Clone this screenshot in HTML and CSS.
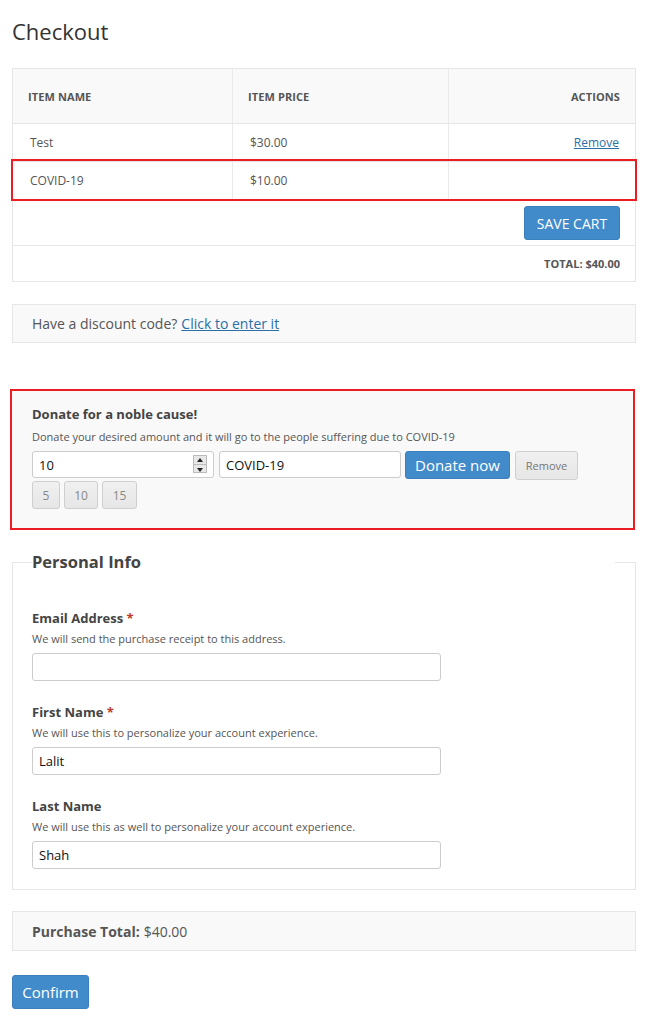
FILE: index.html
```html
<!DOCTYPE html>
<html>
<head>
<meta charset="utf-8">
<link rel="stylesheet" href="styles.css">
</head>
<body>
<div class="page">
  <h1 class="title">Checkout</h1>

  <div class="cart">
    <div class="row head">
      <div class="cell c1">Item Name</div>
      <div class="cell c2">Item Price</div>
      <div class="cell c3">Actions</div>
    </div>
    <div class="row item">
      <div class="cell c1">Test</div>
      <div class="cell c2">$30.00</div>
      <div class="cell c3"><a href="#" class="link">Remove</a></div>
    </div>
    <div class="row item highlight">
      <div class="cell c1">COVID-19</div>
      <div class="cell c2">$10.00</div>
      <div class="cell c3"></div>
    </div>
    <div class="row save-row">
      <button class="btn btn-primary btn-save">Save Cart</button>
    </div>
    <div class="row total-row">Total: $40.00</div>
  </div>

  <div class="well discount">Have a discount code? <a href="#" class="link">Click to enter it</a></div>

  <div class="donate">
    <div class="donate-title">Donate for a noble cause!</div>
    <div class="donate-desc">Donate your desired amount and it will go to the people suffering due to COVID-19</div>
    <div class="donate-row">
      <div class="num-wrap">
        <input class="input donate-input" type="text" value="10">
        <span class="spinner"><span class="sp-up"></span><span class="sp-down"></span></span>
      </div>
      <input class="input donate-input" type="text" value="COVID-19">
      <button class="btn btn-primary btn-donate">Donate now</button>
      <button class="btn btn-grey btn-remove">Remove</button>
    </div>
    <div class="amounts">
      <button class="btn btn-grey amt a5">5</button>
      <button class="btn btn-grey amt a10">10</button>
      <button class="btn btn-grey amt a15">15</button>
    </div>
  </div>

  <fieldset class="personal">
    <legend class="legend">Personal Info</legend>
    <div class="field first">
      <label class="label">Email Address <span class="req">*</span></label>
      <div class="help">We will send the purchase receipt to this address.</div>
      <input class="input field-input" type="text" value="">
    </div>
    <div class="field">
      <label class="label">First Name <span class="req">*</span></label>
      <div class="help">We will use this to personalize your account experience.</div>
      <input class="input field-input" type="text" value="Lalit">
    </div>
    <div class="field">
      <label class="label">Last Name</label>
      <div class="help">We will use this as well to personalize your account experience.</div>
      <input class="input field-input" type="text" value="Shah">
    </div>
  </fieldset>

  <div class="well purchase"><strong class="pt-label">Purchase Total:</strong> $40.00</div>

  <button class="btn btn-primary btn-confirm">Confirm</button>
</div>
</body>
</html>
```
FILE: styles.css
```css
* { box-sizing: border-box; }
html, body { margin: 0; padding: 0; background: #fff; }
body { font-family: "Open Sans", "Liberation Sans", sans-serif; color: #555; }

.page { width: 624px; margin-left: 12px; }

.title {
  margin: 14px 0 20px;
  font-size: 22px;
  line-height: 34px;
  font-weight: 400;
  color: #333;
}

.cart { border: 1px solid #e6e6e6; border-top: none; }
.row { display: flex; border-top: 1px solid #e6e6e6; }
.cell { font-size: 12px; display: flex; align-items: center; }
.c1 { width: 220px; border-right: 1px solid #eaeaea; }
.c2 { width: 216px; border-right: 1px solid #eaeaea; }
.c3 { flex: 1; justify-content: flex-end; }

.head { height: 55px; background: #f9f9f9; }
.head .cell { font-size: 11px; font-weight: 700; text-transform: uppercase; color: #555; padding: 0 15px 0 15px; letter-spacing: 0.1px; }
.head .c3 { padding-right: 15px; }

.item { height: 38px; }
.item .cell { padding: 0 16px 0 17px; color: #555; }
.item .c3 { padding-right: 16px; }

.highlight { outline: 2px solid #ec1c24; outline-offset: 0px; position: relative; }

.link { color: #2a6fa8; text-decoration: underline; }

.save-row { height: 46px; justify-content: flex-end; align-items: flex-start; padding: 6px 15px 0 0; }
.total-row { height: 36px; justify-content: flex-end; align-items: center; padding-right: 15px; font-size: 11px; font-weight: 700; text-transform: uppercase; color: #555; }

.btn {
  font-family: "Open Sans", "Liberation Sans", sans-serif;
  border-radius: 3px;
  cursor: pointer;
  padding: 0;
}
.btn-primary { background: #428bca; border: 1px solid #3b80bd; color: #fff; }
.btn-grey { background: linear-gradient(#f0f0f0, #e6e6e6); border: 1px solid #cfcfcf; color: #888; }

.btn-save { width: 96px; height: 34px; font-size: 14px; text-transform: uppercase; }

.well { background: #f9f9f9; border: 1px solid #e6e6e6; }
.discount { margin-top: 22px; height: 39px; display: flex; align-items: center; padding-left: 19px; font-size: 14px; color: #555; }
.discount .link { margin-left: 4px; }

.donate {
  margin-top: 46px;
  margin-left: -2px;
  width: 625px;
  height: 141px;
  background: #f9f9f9;
  border: 2px solid #ec1c24;
  padding: 13px 0 0 20px;
}
.donate-title { font-size: 13px; font-weight: 700; color: #444; line-height: 20px; }
.donate-desc { font-size: 11px; color: #555; line-height: 16px; margin-top: 5px; }
.donate-row { display: flex; gap: 5px; align-items: flex-start; margin-top: 6px; }
.num-wrap { position: relative; }
.input {
  font-family: "Open Sans", "Liberation Sans", sans-serif;
  border: 1px solid #ccc;
  border-radius: 3px;
  background: #fff;
  color: #111;
  outline: none;
}
.donate-input { width: 182px; height: 27px; font-size: 13px; padding: 0 6px; }
.spinner {
  position: absolute; left: 161px; top: 4px; width: 14px; height: 18px;
  border: 1px solid #bbb; background: #e8e8e8; display: flex; flex-direction: column;
}
.sp-up, .sp-down { flex: 1; position: relative; }
.sp-up { border-bottom: 1px solid #bbb; }
.sp-up::after, .sp-down::after {
  content: ""; position: absolute; left: 3px; width: 0; height: 0;
  border-left: 3px solid transparent; border-right: 3px solid transparent;
}
.sp-up::after { top: 2px; border-bottom: 4px solid #222; }
.sp-down::after { top: 3px; border-top: 4px solid #222; }

.btn-donate { width: 105px; height: 28px; font-size: 15px; margin-left: -1px; }
.btn-remove { width: 63px; height: 29px; font-size: 11px; color: #777; }

.amounts { display: flex; gap: 4px; margin-top: 1px; }
.amt { height: 28px; font-size: 12px; }
.a5 { width: 28px; }
.a10 { width: 34px; }
.a15 { width: 35px; }

.personal {
  margin: 20px 0 0;
  border: 1px solid #e6e6e6;
  padding: 0 20px 20px 19px;
  min-width: 0;
}
.legend {
  width: 100%;
  padding: 0;
  font-size: 16.5px;
  font-weight: 700;
  color: #444;
  line-height: 24px;
}
.field { margin-top: 22px; }
.field.first { margin-top: 35px; }
.label { display: block; font-size: 13px; font-weight: 700; color: #444; line-height: 18px; }
.req { color: #c0392b; }
.help { font-size: 11px; color: #555; line-height: 16px; margin-top: 4px; }
.field-input { display: block; width: 409px; height: 28px; font-size: 13px; padding: 0 6px; margin-top: 6px; }

.purchase { margin-top: 21px; height: 40px; display: flex; align-items: center; padding-left: 19px; font-size: 14px; color: #555; }
.pt-label { font-weight: 700; margin-right: 4px; }

.btn-confirm { margin-top: 24px; width: 77px; height: 34px; font-size: 15px; }
```
